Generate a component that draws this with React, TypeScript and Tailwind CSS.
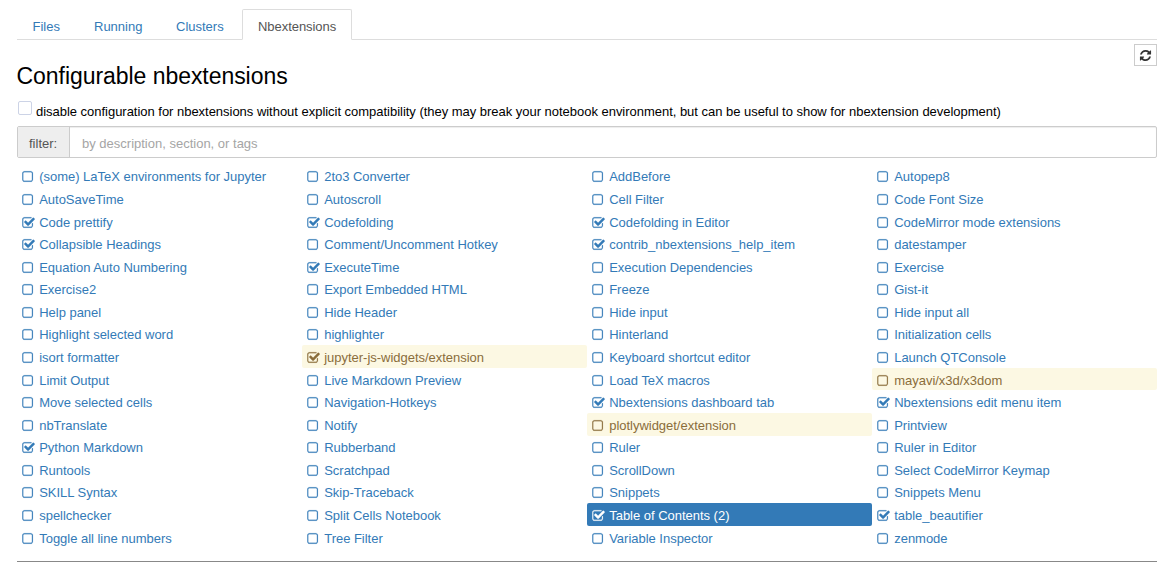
import React from 'react';

type Row = [string, string, string, string];

const rows: Row[] = [
  ['(some) LaTeX environments for Jupyter', '2to3 Converter', 'AddBefore', 'Autopep8'],
  ['AutoSaveTime', 'Autoscroll', 'Cell Filter', 'Code Font Size'],
  ['*Code prettify', '*Codefolding', '*Codefolding in Editor', 'CodeMirror mode extensions'],
  ['*Collapsible Headings', 'Comment/Uncomment Hotkey', '*contrib_nbextensions_help_item', 'datestamper'],
  ['Equation Auto Numbering', '*ExecuteTime', 'Execution Dependencies', 'Exercise'],
  ['Exercise2', 'Export Embedded HTML', 'Freeze', 'Gist-it'],
  ['Help panel', 'Hide Header', 'Hide input', 'Hide input all'],
  ['Highlight selected word', 'highlighter', 'Hinterland', 'Initialization cells'],
  ['isort formatter', '*jupyter-js-widgets/extension', 'Keyboard shortcut editor', 'Launch QTConsole'],
  ['Limit Output', 'Live Markdown Preview', 'Load TeX macros', 'mayavi/x3d/x3dom'],
  ['Move selected cells', 'Navigation-Hotkeys', '*Nbextensions dashboard tab', '*Nbextensions edit menu item'],
  ['nbTranslate', 'Notify', 'plotlywidget/extension', 'Printview'],
  ['*Python Markdown', 'Rubberband', 'Ruler', 'Ruler in Editor'],
  ['Runtools', 'Scratchpad', 'ScrollDown', 'Select CodeMirror Keymap'],
  ['SKILL Syntax', 'Skip-Traceback', 'Snippets', 'Snippets Menu'],
  ['spellchecker', 'Split Cells Notebook', '*Table of Contents (2)', '*table_beautifier'],
  ['Toggle all line numbers', 'Tree Filter', 'Variable Inspector', 'zenmode'],
];

const incompatible = ['jupyter-js-widgets/extension', 'mayavi/x3d/x3dom', 'plotlywidget/extension'];
const selected = 'Table of Contents (2)';

const SQUARE =
  'M1120 256H288q-66 0-113 47t-47 113v832q0 66 47 113t113 47h832q66 0 113-47t47-113V416q0-66-47-113t-113-47zm288 160v832q0 119-84.500 203.500T1120 1536H288q-119 0-203.500-84.500T0 1248V416q0-119 84.500-203.500T288 128h832q119 0 203.500 84.500T1408 416z';
const CHECKED =
  'M1408 930v318q0 119-84.500 203.500T1120 1536H288q-119 0-203.500-84.500T0 1248V416q0-119 84.500-203.500T288 128h832q63 0 117 25 15 7 18 23 3 17-9 29l-49 49q-10 10-23 10-3 0-9-2-23-6-45-6H288q-66 0-113 47t-47 113v832q0 66 47 113t113 47h832q66 0 113-47t47-113V994q0-13 9-22l64-64q10-10 23-10 6 0 12 3 20 8 20 29zm231-489l-814 814q-24 24-57 24t-57-24l-430-430q-24-24-24-57t24-57l110-110q24-24 57-24t57 24l263 263 647-647q24-24 57-24t57 24l110 110q24 24 24 57t-24 57z';
const REFRESH =
  'M1639 1056q0 5-1 7-64 268-268 434.500t-478 166.500q-146 0-282.500-55t-243.500-157l-129 129q-19 19-45 19t-45-19-19-45v-448q0-26 19-45t45-19h448q26 0 45 19t19 45-19 45l-137 137q71 66 161 102t187 36q134 0 250-65t186-179q11-17 53-117 8-23 30-23h192q13 0 22.500 9.500t9.500 22.500zm25-800v448q0 26-19 45t-45 19h-448q-26 0-45-19t-19-45 19-45l138-138q-148-137-349-137-134 0-250 65t-186 179q-11 17-53 117-8 23-30 23h-199q-13 0-22.500-9.500t-9.500-22.500v-7q65-268 270-434.500t480-166.500q146 0 284 55.500t245 156.500l130-129q19-19 45-19t45 19 19 45z';

function CheckIcon({ on }: { on: boolean }) {
  return (
    <svg
      viewBox="-40 -30 1730 1730"
      className="mt-[5.775px] h-[13px] w-[13px] shrink-0"
      fill="currentColor"
      stroke="currentColor"
      strokeWidth="20"
    >
      <path d={on ? CHECKED : SQUARE} />
    </svg>
  );
}

function Item({ value }: { value: string }) {
  const on = value.startsWith('*');
  const name = on ? value.slice(1) : value;
  const tone =
    name === selected
      ? 'bg-[#337ab7] text-white rounded-[2px]'
      : incompatible.includes(name)
        ? 'bg-[#fcf8e3] text-[#8a6d3b] rounded-[2px]'
        : 'text-[#337ab7]';
  return (
    <a className={`flex h-[22.579px] pl-[5px] ${tone}`}>
      <CheckIcon on={on} />
      <span className="mt-[3.775px] ml-[4.200px] whitespace-nowrap tracking-[-0.02px]">{name}</span>
    </a>
  );
}

export default function App() {
  return (
    <div className="h-[572px] overflow-hidden bg-white pt-[9px] pr-[13px] pl-[17px] font-['Liberation_Sans',Arial,sans-serif] text-[13px] leading-[18px] text-black">
      <nav className="flex h-[31px] border-b border-[#ddd] text-[#337ab7]">
        <a className="w-[60px] pt-[9px] pl-[15.500px]">Files</a>
        <a className="w-[82px] pt-[9px] pl-[17px]">Running</a>
        <a className="w-[83px] pt-[9px] pl-[17px]">Clusters</a>
        <a className="h-[31px] w-[110px] rounded-t-[2px] border border-b-white border-[#ddd] bg-white pt-[8px] pl-[15px] tracking-[-0.05px] text-[#555]">
          Nbextensions
        </a>
      </nav>
      <header className="flex h-[60px] justify-between pt-[4px]">
        <h1 className="-ml-[0.5px] pt-[20px] text-[23px] leading-[25px] tracking-[-0.05px]">
          Configurable nbextensions
        </h1>
        <button className="flex h-[22px] w-[23px] items-center justify-center border border-[#ccc] text-[#333]">
          <svg viewBox="0 0 1792 1792" className="h-[13px] w-[13px]" fill="currentColor">
            <path d={REFRESH} />
          </svg>
        </button>
      </header>
      <label className="flex h-[26px] pt-[1px]">
        <span className="mr-[4px] ml-[1px] h-[14px] w-[14px] rounded-[2px] border border-[#ccd3e6]" />
        <span className="pt-[2px] tracking-[-0.025px]">
          disable configuration for nbextensions without explicit compatibility (they may break your notebook
          environment, but can be useful to show for nbextension development)
        </span>
      </label>
      <div className="flex h-[32px] rounded-[2px] border border-[#ccc] shadow-[inset_0_1px_1px_rgba(0,0,0,0.075)]">
        <span className="w-[52px] border-r border-[#ccc] bg-[#eee] pt-[8px] pl-[11px] text-[#555]">filter:</span>
        <span className="pt-[8px] pl-[12px] text-[#a5a5a5]">by description, section, or tags</span>
      </div>
      <main className="mt-[6.600px] grid grid-cols-4 border-b border-[#888] pb-[12.500px]">
        {rows.flat().map((value) => (
          <Item key={value} value={value} />
        ))}
      </main>
    </div>
  );
}
